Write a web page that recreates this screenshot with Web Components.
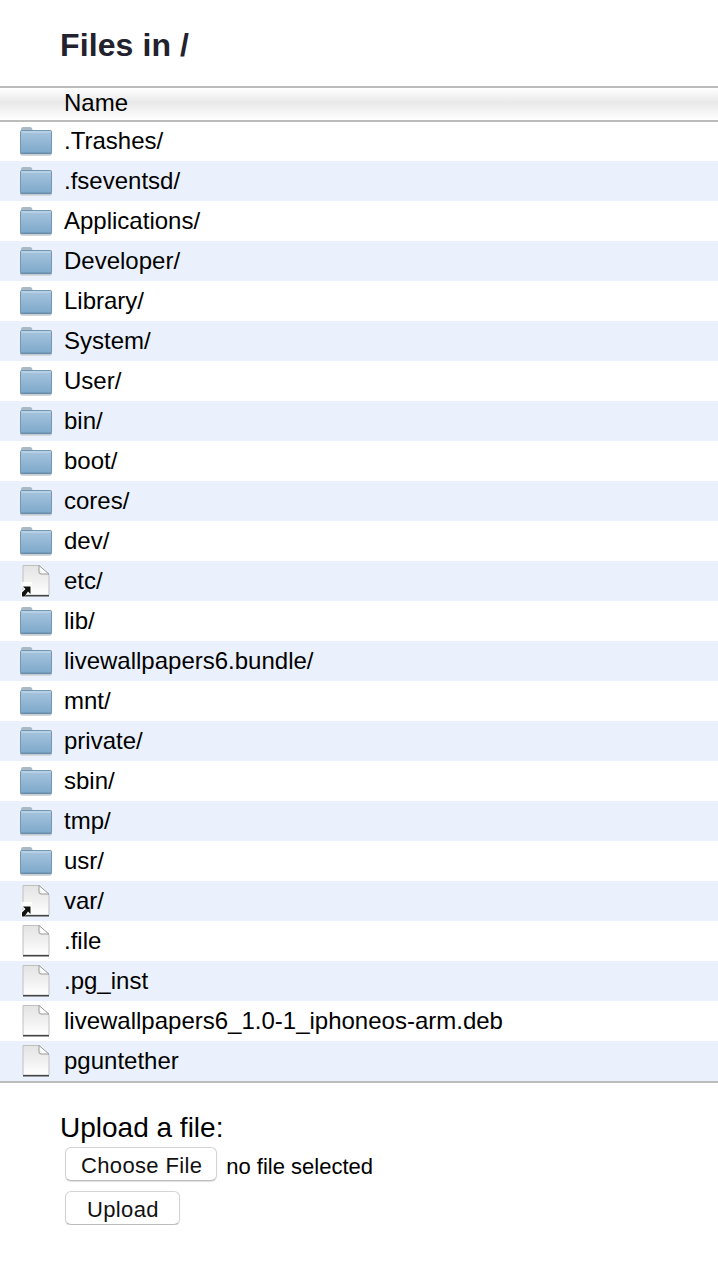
<!DOCTYPE html>
<html>
<head>
<meta charset="utf-8">
<title>Files in /</title>
<style>
  html, body { margin: 0; padding: 0; background: #fff; }
  body { font-family: "Liberation Sans", Arial, sans-serif; color: #000; }
</style>
</head>
<body>
<file-page>
  <span slot="title">Files in /</span>
  <file-row type="folder" name=".Trashes/"></file-row>
  <file-row type="folder" name=".fseventsd/"></file-row>
  <file-row type="folder" name="Applications/"></file-row>
  <file-row type="folder" name="Developer/"></file-row>
  <file-row type="folder" name="Library/"></file-row>
  <file-row type="folder" name="System/"></file-row>
  <file-row type="folder" name="User/"></file-row>
  <file-row type="folder" name="bin/"></file-row>
  <file-row type="folder" name="boot/"></file-row>
  <file-row type="folder" name="cores/"></file-row>
  <file-row type="folder" name="dev/"></file-row>
  <file-row type="link" name="etc/"></file-row>
  <file-row type="folder" name="lib/"></file-row>
  <file-row type="folder" name="livewallpapers6.bundle/"></file-row>
  <file-row type="folder" name="mnt/"></file-row>
  <file-row type="folder" name="private/"></file-row>
  <file-row type="folder" name="sbin/"></file-row>
  <file-row type="folder" name="tmp/"></file-row>
  <file-row type="folder" name="usr/"></file-row>
  <file-row type="link" name="var/"></file-row>
  <file-row type="file" name=".file"></file-row>
  <file-row type="file" name=".pg_inst"></file-row>
  <file-row type="file" name="livewallpapers6_1.0-1_iphoneos-arm.deb"></file-row>
  <file-row type="file" name="pguntether"></file-row>
  <upload-form slot="footer"></upload-form>
</file-page>

<script>
const FOLDER_ICON = `
  <svg width="32" height="32" viewBox="0 0 32 32">
    <defs>
      <linearGradient id="fb" x1="0" y1="0" x2="0" y2="1">
        <stop offset="0" stop-color="#a6c5de"/>
        <stop offset="1" stop-color="#7ea8ca"/>
      </linearGradient>
    </defs>
    <path d="M1 4 Q1 2 3 2 H10 Q12 2 12.5 5 H30 Q31 5 31 6.5 V10 H1 Z" fill="#a9b9c6"/>
    <rect x="0.5" y="5.5" width="31" height="23" rx="1" fill="url(#fb)" stroke="#7397b5" stroke-width="1"/>
    <rect x="1.5" y="6.5" width="29" height="1.2" fill="#c4d8e8"/>
    <rect x="0.5" y="27.5" width="31" height="2" fill="#6a8dac"/>
    <rect x="1" y="29.5" width="30" height="1.5" fill="#d8d8d8"/>
  </svg>`;

const PAGE_SHAPE = `
  <defs>
    <linearGradient id="pg" x1="0" y1="0" x2="0" y2="1">
      <stop offset="0" stop-color="#e4e4e4"/>
      <stop offset="0.5" stop-color="#f0f0f0"/>
      <stop offset="1" stop-color="#ffffff"/>
    </linearGradient>
  </defs>
  <path d="M3 0.5 H19 L29 10 V30 H3 Z" fill="url(#pg)" stroke="#c0c0c0" stroke-width="1"/>
  <path d="M19 0.5 V7 Q19 9 21 9 H29 Z" fill="#fcfcfc" stroke="#9a9a9a" stroke-width="1"/>
  <rect x="3" y="30" width="26" height="1.5" fill="#444"/>`;

const FILE_ICON = `<svg width="32" height="32" viewBox="0 0 32 32">${PAGE_SHAPE}</svg>`;

const LINK_ICON = `
  <svg width="32" height="32" viewBox="0 0 32 32">
    ${PAGE_SHAPE}
    <path d="M1 32 V27 L4 24 L1.5 21 V17 H12 V28 L8.5 26 L4.5 32 Z" fill="#fff" opacity="0.85"/>
    <path d="M2 31.5 V27.5 L5.5 24 L3 21.5 H10.5 V29 L8 26.5 L4.5 31.5 Z" fill="#111"/>
  </svg>`;

class FilePage extends HTMLElement {
  constructor() {
    super();
    const shadow = this.attachShadow({ mode: 'open' });
    shadow.innerHTML = `
      <style>
        :host { display: block; }
        h1 {
          margin: 0;
          height: 86px;
          box-sizing: border-box;
          padding: 27px 0 0 60px;
          font-size: 32px;
          line-height: 37px;
          font-weight: bold;
          letter-spacing: 0.1px;
          color: #22222e;
        }
        .head {
          height: 36px;
          box-sizing: border-box;
          border-top: 2px solid #bcbcbc;
          border-bottom: 2px solid #bcbcbc;
          padding-left: 64px;
          font-size: 24px;
          line-height: 30px;
          background: linear-gradient(#ffffff 0, #e9e9e9 45%, #ededed 55%, #ffffff 100%);
        }
        .rows { margin-top: -1px; border-bottom: 2px solid #bcbcbc; }
        ::slotted(file-row:nth-of-type(even)) { background: #eaf1fc; }
      </style>
      <h1><slot name="title"></slot></h1>
      <div class="head">Name</div>
      <div class="rows"><slot></slot></div>
      <slot name="footer"></slot>
    `;
  }
}

class FileRow extends HTMLElement {
  constructor() {
    super();
    this.attachShadow({ mode: 'open' });
  }
  connectedCallback() {
    const type = this.getAttribute('type');
    const icon = type === 'folder' ? FOLDER_ICON : type === 'link' ? LINK_ICON : FILE_ICON;
    this.shadowRoot.innerHTML = `
      <style>
        :host {
          display: flex;
          align-items: center;
          height: 40px;
          font-size: 24px;
          line-height: 40px;
        }
        .icon {
          width: 32px;
          height: 32px;
          margin-left: 20px;
          margin-right: 12px;
        }
        svg { display: block; filter: blur(0.45px); overflow: visible; }
      </style>
      <div class="icon">${icon}</div>
      <span>${this.getAttribute('name')}</span>
    `;
  }
}

class UploadForm extends HTMLElement {
  constructor() {
    super();
    const shadow = this.attachShadow({ mode: 'open' });
    shadow.innerHTML = `
      <style>
        :host {
          display: block;
          padding: 27px 0 0 60px;
          font-size: 28px;
        }
        .label { line-height: 36px; }
        .line {
          display: flex;
          align-items: center;
          gap: 9px;
          padding-left: 5px;
          margin-top: 1px;
        }
        .line + .line { margin-top: 10px; }
        .btn {
          height: 34px;
          box-sizing: border-box;
          padding: 3px 14px 0 15px;
          display: flex;
          align-items: center;
          border: 1px solid #d4d4d4;
          border-bottom-color: #bcbcbc;
          border-radius: 6px;
          background: #fff;
          box-shadow: 0 1px 1px rgba(0,0,0,0.12);
          font-size: 22px;
          letter-spacing: 0.35px;
          color: #111;
        }
        .btn.wide { padding: 3px 20px 0 21px; }
        .none { font-size: 22px; padding-top: 5px; }
      </style>
      <div class="label">Upload a file:</div>
      <div class="line"><span class="btn">Choose File</span><span class="none">no file selected</span></div>
      <div class="line"><span class="btn wide">Upload</span></div>
    `;
  }
}

customElements.define('file-page', FilePage);
customElements.define('file-row', FileRow);
customElements.define('upload-form', UploadForm);
</script>
</body>
</html>
